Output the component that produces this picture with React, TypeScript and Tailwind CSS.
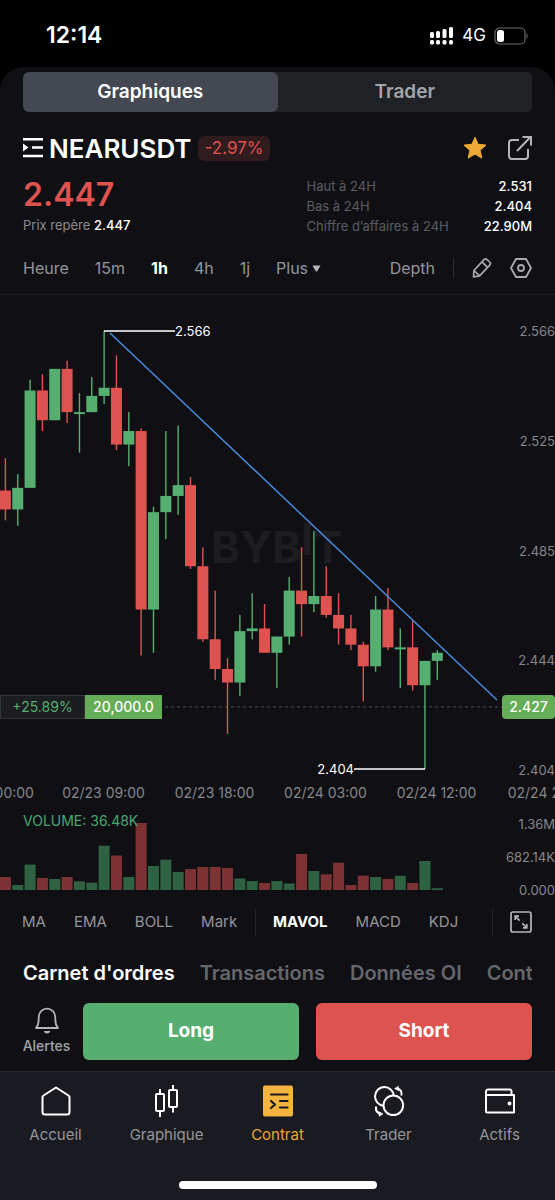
import { useState } from 'react';
import clsx from 'clsx';

type Candle = [open: number, high: number, low: number, close: number, volume: number];

// hourly candles, volume in thousands
const candles: Candle[] = [
  [2.507, 2.519, 2.496, 2.5, 264],
  [2.5, 2.513, 2.494, 2.508, 102],
  [2.508, 2.548, 2.508, 2.544, 515],
  [2.544, 2.55, 2.529, 2.533, 244],
  [2.533, 2.552, 2.533, 2.552, 223],
  [2.552, 2.555, 2.532, 2.536, 264],
  [2.536, 2.543, 2.521, 2.536, 176],
  [2.536, 2.549, 2.536, 2.542, 150],
  [2.542, 2.566, 2.539, 2.545, 900],
  [2.545, 2.557, 2.522, 2.524, 700],
  [2.524, 2.536, 2.516, 2.529, 264],
  [2.529, 2.53, 2.446, 2.463, 1360],
  [2.463, 2.501, 2.447, 2.499, 487],
  [2.499, 2.529, 2.489, 2.505, 615],
  [2.505, 2.531, 2.498, 2.509, 365],
  [2.509, 2.512, 2.478, 2.479, 426],
  [2.479, 2.486, 2.451, 2.452, 467],
  [2.452, 2.47, 2.437, 2.441, 467],
  [2.441, 2.445, 2.417, 2.436, 447],
  [2.436, 2.461, 2.431, 2.455, 233],
  [2.455, 2.469, 2.452, 2.456, 183],
  [2.456, 2.465, 2.447, 2.447, 142],
  [2.447, 2.453, 2.434, 2.453, 183],
  [2.453, 2.475, 2.45, 2.47, 132],
  [2.47, 2.486, 2.453, 2.465, 731],
  [2.465, 2.492, 2.462, 2.468, 386],
  [2.468, 2.479, 2.46, 2.461, 319],
  [2.461, 2.469, 2.45, 2.456, 554],
  [2.456, 2.461, 2.448, 2.45, 102],
  [2.45, 2.451, 2.429, 2.442, 291],
  [2.442, 2.468, 2.44, 2.463, 264],
  [2.463, 2.471, 2.448, 2.449, 225],
  [2.449, 2.456, 2.434, 2.449, 290],
  [2.449, 2.459, 2.433, 2.435, 142],
  [2.435, 2.444, 2.404, 2.444, 589],
  [2.444, 2.448, 2.437, 2.447, 36],
];

const STEP = 12.34;
const BAR = 11;
const HIGH = 2.566;
const candleX = (i: number) => 5.4 + i * STEP;
const priceY = (p: number) => 36 + (HIGH - p) * 2704;

const priceTicks = ['2.566', '2.525', '2.485', '2.444', '2.404'];
const timeTicks = ['02/23 00:00', '02/23 09:00', '02/23 18:00', '02/24 03:00', '02/24 12:00', '02/24 21:00'];

function StatusBar() {
  return (
    <div className="flex h-[67px] items-center justify-between pl-[46px] pr-[26px] pt-1 text-white">
      <span className="text-[23px] font-semibold">12:14</span>
      <div className="flex items-center gap-2">
        <svg width="25" height="18" viewBox="0 0 25 18" fill="#fff">
          <rect x="1" y="5" width="4" height="6" rx="1.5" />
          <rect x="7" y="4" width="4" height="7" rx="1.5" />
          <rect x="13.5" y="2" width="4" height="9" rx="1.5" />
          <rect x="20" y="0" width="4" height="11" rx="1.5" />
          <rect x="1" y="13" width="4" height="4.5" rx="1.5" />
          <rect x="7" y="13" width="4" height="4.5" rx="1.5" />
          <rect x="13.5" y="13" width="4" height="4.5" rx="1.5" />
          <rect x="20" y="13" width="4" height="4.5" rx="1.5" />
        </svg>
        <span className="text-[17px]">4G</span>
        <svg width="35" height="18" viewBox="0 0 35 18" fill="none">
          <rect x="1" y="1" width="30" height="16" rx="4.5" stroke="#6b6b6b" strokeWidth="1.2" />
          <rect x="3" y="3" width="7" height="12" rx="2.5" fill="#fff" />
          <path d="M32.500 6.500c1.600.5 1.600 4.500 0 5z" fill="#6b6b6b" />
        </svg>
      </div>
    </div>
  );
}

function ModeSwitch() {
  const [mode, setMode] = useState('Graphiques');
  return (
    <div className="mx-[23px] flex rounded-md bg-[#202125]">
      {['Graphiques', 'Trader'].map((m) => (
        <button
          key={m}
          onClick={() => setMode(m)}
          className={clsx(
            'h-10 flex-1 rounded-md text-[19px] font-semibold',
            m === mode ? 'bg-[#434852] text-white' : 'text-[#a3a4a9]'
          )}
        >
          {m}
        </button>
      ))}
    </div>
  );
}

function SymbolHeader() {
  return (
    <header className="px-[23px]">
      <div className="flex h-[52px] items-center justify-between pt-5">
        <div className="flex items-center">
          <button aria-label="Marchés">
            <svg width="26" height="22" viewBox="0 0 26 22" stroke="#fff" strokeWidth="2.4" fill="none">
              <path d="M0 2.200h20M9 10.500h11M0 19h20" />
              <path d="M0 6.500l5.500 4-5.500 4z" fill="#fff" stroke="none" />
            </svg>
          </button>
          <h1 className="text-[26px] font-semibold text-white">NEARUSDT</h1>
          <span className="ml-1.5 rounded-md bg-[#301b1f] px-[7px] text-[17px] leading-[25px] text-[#de5350]">-2.97%</span>
        </div>
        <div className="flex items-center gap-[21px]">
          <button aria-label="Favori">
            <svg width="24" height="24" viewBox="0 0 24 24">
              <path
                d="M12 1.200l3.100 7.100 7.900.8-5.900 5.200 1.700 7.800-6.800-4-6.800 4 1.700-7.800L1 9.100l7.900-.8z"
                fill="#f0a935"
                stroke="#f0a935"
                strokeLinejoin="round"
              />
            </svg>
          </button>
          <button aria-label="Partager">
            <svg width="24" height="26" viewBox="0 0 24 26" fill="none" stroke="#b4b5b9" strokeWidth="2">
              <path d="M11 5H4a3 3 0 0 0-3 3v13a3 3 0 0 0 3 3h13a3 3 0 0 0 3-3v-7" />
              <path d="M9 16L22 2.500M14.500 2H23v8.500" />
            </svg>
          </button>
        </div>
      </div>
      <div className="mt-3 flex items-start justify-between">
        <div>
          <div className="text-[32px] font-semibold leading-[38px] text-[#de5350]">2.447</div>
          <div className="mt-px text-[13px] leading-5 text-[#8a8b90]">
            Prix repère <span className="font-medium text-white">2.447</span>
          </div>
        </div>
        <dl className="grid grid-cols-[auto_auto] gap-x-[35px] text-[13px] leading-5 text-[#5c5d63]">
          <dt>Haut à 24H</dt>
          <dd className="text-right font-medium text-white">2.531</dd>
          <dt>Bas à 24H</dt>
          <dd className="text-right font-medium text-white">2.404</dd>
          <dt>Chiffre d’affaires à 24H</dt>
          <dd className="text-right font-medium text-white">22.90M</dd>
        </dl>
      </div>
    </header>
  );
}

function IntervalBar() {
  const [interval, setInterval] = useState('1h');
  return (
    <div className="mt-5 flex h-[39px] items-start justify-between border-b border-[#1e1f23] px-[23px] text-[16px] leading-6 text-[#94959a]">
      <div className="flex gap-[26px]">
        {['Heure', '15m', '1h', '4h', '1j'].map((t) => (
          <button
            key={t}
            onClick={() => setInterval(t)}
            className={clsx(t === interval && 'font-bold text-white')}
          >
            {t}
          </button>
        ))}
        <button className="flex items-center gap-1">
          Plus
          <svg width="9" height="8" viewBox="0 0 9 8" fill="#b4b5b9">
            <path d="M.5 1.500h8L5.200 7.200a.8.8 0 0 1-1.400 0z" />
          </svg>
        </button>
      </div>
      <div className="flex items-center gap-[18px]">
        <button>Depth</button>
        <span className="h-5 w-px bg-[#2b2c31]" />
        <button aria-label="Dessiner">
          <svg width="20" height="22" viewBox="0 0 20 22" fill="none" stroke="#a9aaaf" strokeWidth="1.7" strokeLinejoin="round">
            <path d="M1.500 19.800l.4-6.300L12 2.600a2.200 2.200 0 0 1 3.100 0l2.600 2.400a2.200 2.200 0 0 1 0 3.100L7.600 18.900z" />
            <path d="M10 4.800l5.600 5.500M2 13.500l5.600 5.300" />
          </svg>
        </button>
        <button aria-label="Réglages">
          <svg width="22" height="22" viewBox="0 0 22 22" fill="none" stroke="#a9aaaf" strokeWidth="1.8" strokeLinejoin="round">
            <path d="M6 2h10l5 9-5 9H6l-5-9z" />
            <circle cx="11" cy="11" r="3" />
          </svg>
        </button>
      </div>
    </div>
  );
}

function PriceChart() {
  return (
    <div className="relative flex">
      <svg className="h-[485px] min-w-0 flex-1" role="img" aria-label="NEARUSDT 1h">
        <g fill="#1c1c21" fontSize="44" fontWeight="700">
          <text x="211" y="268">BYB</text>
          <text x="301" y="260">I</text>
          <text x="313" y="268">T</text>
        </g>
        <line x1="165" x2="100%" y1={priceY(2.427)} y2={priceY(2.427)} stroke="#4a4f4a" strokeDasharray="3 3" />
        {candles.map(([open, high, low, close], i) => {
          const top = priceY(Math.max(open, close));
          const height = Math.max(Math.abs(open - close) * 2704, 2);
          return (
            <g key={i} fill={close >= open ? '#56af71' : '#de5350'}>
              <rect x={candleX(i) - 0.7} y={priceY(high)} width="1.4" height={priceY(low) - priceY(high)} />
              <rect x={candleX(i) - BAR / 2} y={top} width={BAR} height={height} />
            </g>
          );
        })}
        <path d="M110 38L497 405" stroke="#4a90e2" strokeWidth="1.4" fill="none" />
        <path d="M104 36H175M354 474H425" stroke="#fff" strokeWidth="1.4" fill="none" />
        <g fill="#fff" fontSize="13">
          <text x="175" y="41">2.566</text>
          <text x="354" y="479" textAnchor="end">2.404</text>
        </g>
      </svg>
      <div className="flex w-[53px] flex-col justify-between pt-[26px] text-right text-[13px] leading-5 text-[#85868b]">
        {priceTicks.map((t) => (
          <span key={t}>{t}</span>
        ))}
      </div>
      <div className="absolute left-0 top-[400px] flex h-6 text-[14px] leading-6">
        <span className="w-[85px] border border-[#34353a] bg-[#1c1d21] text-center leading-[22px] text-[#56af71]">+25.89%</span>
        <span className="w-[77px] bg-[#66ad57] text-center font-medium text-white">20,000.0</span>
      </div>
      <span className="absolute right-0 top-[400px] h-6 w-[53px] rounded bg-[#66ad57] text-center text-[14px] font-medium leading-6 text-white">
        2.427
      </span>
    </div>
  );
}

function TimeAxis() {
  return (
    <div className="overflow-hidden">
      <div className="-ml-[63px] flex text-[14px] leading-[26px] text-[#85868b]">
        {timeTicks.map((t) => (
          <span key={t} className="w-[111px] shrink-0 text-center">
            {t}
          </span>
        ))}
      </div>
    </div>
  );
}

function VolumeChart() {
  return (
    <div className="relative flex">
      <svg className="h-[94px] min-w-0 flex-1" role="img" aria-label="Volume">
        {candles.map(([open, , , close, volume], i) => {
          const height = (volume / 1360) * 67;
          return (
            <rect
              key={i}
              x={candleX(i) - BAR / 2}
              y={84 - height}
              width={BAR}
              height={height}
              fill={close >= open ? '#2f6243' : '#7c3233'}
            />
          );
        })}
      </svg>
      <div className="flex w-[53px] flex-col items-end justify-between pt-2 text-[13px] leading-5 text-[#85868b]">
        <span>1.36M</span>
        <span>682.14K</span>
        <span>0.000</span>
      </div>
      <span className="absolute left-[23px] top-[5px] text-[14px] leading-5 text-[#4ba56c]">VOLUME: 36.48K</span>
    </div>
  );
}

function IndicatorBar() {
  const [sub, setSub] = useState('MAVOL');
  return (
    <div className="flex h-11 items-center justify-between pl-[22px] pr-[23px] text-[15px] text-[#94959a]">
      <div className="flex items-center gap-7">
        {['MA', 'EMA', 'BOLL', 'Mark'].map((t) => (
          <button key={t}>{t}</button>
        ))}
      </div>
      <span className="h-7 w-px bg-[#222328]" />
      <div className="flex items-center gap-7">
        {['MAVOL', 'MACD', 'KDJ'].map((t) => (
          <button key={t} onClick={() => setSub(t)} className={clsx(t === sub && 'font-bold text-white')}>
            {t}
          </button>
        ))}
      </div>
      <span className="ml-4 h-7 w-px bg-[#222328]" />
      <button aria-label="Plein écran">
        <svg width="22" height="22" viewBox="0 0 22 22" fill="none" stroke="#b4b5b9" strokeWidth="1.7">
          <rect x="1" y="1" width="20" height="20" rx="2" />
          <path d="M5.200 9V5.200H9M5.200 5.200l4.400 4.400M16.800 13v3.800H13M16.800 16.800l-4.400-4.400" />
        </svg>
      </button>
    </div>
  );
}

function DetailTabs() {
  const [tab, setTab] = useState("Carnet d'ordres");
  return (
    <div className="mx-[23px] flex gap-[25px] overflow-hidden whitespace-nowrap pt-[15px] text-[20px] font-semibold leading-7">
      {["Carnet d'ordres", 'Transactions', 'Données OI', 'Cont'].map((t) => (
        <button key={t} onClick={() => setTab(t)} className={t === tab ? 'text-white' : 'text-[#66676c]'}>
          {t}
        </button>
      ))}
    </div>
  );
}

function TradeActions() {
  return (
    <div className="flex gap-[17px] px-[23px] pb-[11px] pt-4">
      <button className="-mr-1 flex w-[47px] shrink-0 flex-col items-center pt-1 text-[14px] font-medium leading-5 text-[#a3a4a9]">
        <svg width="26" height="28" viewBox="0 0 26 28" fill="none" stroke="#b4b5b9" strokeWidth="1.8" strokeLinejoin="round">
          <path d="M2 21c2-2.300 2.700-4.500 2.700-8.500V10a8.300 8.300 0 0 1 16.600 0v2.500c0 4 .7 6.200 2.700 8.500z" />
          <path d="M10 24.500c1.500 2 4.500 2 6 0z" fill="#b4b5b9" strokeWidth="1" />
        </svg>
        <span className="mt-px">Alertes</span>
      </button>
      <button className="h-[57px] flex-1 rounded-md bg-[#56af71] text-[19px] font-bold text-white">Long</button>
      <button className="h-[57px] flex-1 rounded-md bg-[#de5350] text-[19px] font-bold text-white">Short</button>
    </div>
  );
}

const navItems = [
  {
    label: 'Accueil',
    icon: <path d="M16 2.500L3.500 10.500a2 2 0 0 0-1 1.800V27a2.500 2.500 0 0 0 2.500 2.500h22a2.500 2.500 0 0 0 2.500-2.500V12.300a2 2 0 0 0-1-1.800z" />,
  },
  {
    label: 'Graphique',
    icon: (
      <>
        <rect x="5" y="9" width="8" height="17" rx="1" />
        <rect x="18" y="5" width="8" height="17" rx="1" />
        <path d="M9 4v5M9 26v6M22 0v5M22 22v5.500" />
      </>
    ),
  },
  {
    label: 'Contrat',
    icon: (
      <>
        <rect x="1" y="0.500" width="30" height="31" rx="2" fill="#f5b43f" stroke="none" />
        <path d="M9 9.500h16.500M18 16h7.500M18 22.500h7.500M9 16l4 3.500-4 3.500" stroke="#1a1b20" strokeWidth="2.200" strokeLinecap="round" />
      </>
    ),
  },
  {
    label: 'Trader',
    icon: (
      <>
        <path d="M10.600 20.800a9.400 9.400 0 1 1 10.200-10.200" />
        <circle cx="20.300" cy="20.300" r="9.800" />
        <path d="M28.500 10.500c.5-4-1.500-6.500-4.500-7M3 21.500c-.5 4 1.500 6.500 4.500 7" />
        <path d="M21.500 3.500l4-2.300v4.600zM10 29l-4-2.300v4.600z" fill="#fff" strokeWidth="0.500" />
      </>
    ),
  },
  {
    label: 'Actifs',
    icon: (
      <>
        <path d="M2 10V6.500A2 2 0 0 1 4 4.500h21.500a2 2 0 0 1 2 2V10M2 10h28v17.500H3.500A1.500 1.500 0 0 1 2 26z" />
        <circle cx="25.500" cy="18.500" r="1" fill="#fff" />
      </>
    ),
  },
];

function BottomNav() {
  return (
    <nav className="border-t border-[#26272c] bg-[#1a1b20] pb-[11px] pt-[13px]">
      <div className="flex">
        {navItems.map(({ label, icon }) => (
          <a
            key={label}
            href="#"
            className={clsx(
              'flex flex-1 flex-col items-center text-[15px] leading-5',
              label === 'Contrat' ? 'text-[#eaa43a]' : 'text-[#94959a]'
            )}
          >
            <svg width="32" height="32" viewBox="0 0 32 32" fill="none" stroke="#fff" strokeWidth="2" strokeLinejoin="round" className="overflow-visible">
              {icon}
            </svg>
            <span className="mt-2">{label}</span>
          </a>
        ))}
      </div>
      <div className="mx-auto mt-9 h-2 w-[198px] rounded-full bg-white" />
    </nav>
  );
}

export default function App() {
  return (
    <div className="bg-black font-['Inter','Liberation_Sans',sans-serif]">
      <StatusBar />
      <main className="rounded-t-[24px] bg-[#101014] pt-[5px]">
        <ModeSwitch />
        <SymbolHeader />
        <IntervalBar />
        <PriceChart />
        <TimeAxis />
        <VolumeChart />
        <IndicatorBar />
        <DetailTabs />
        <TradeActions />
      </main>
      <BottomNav />
    </div>
  );
}
